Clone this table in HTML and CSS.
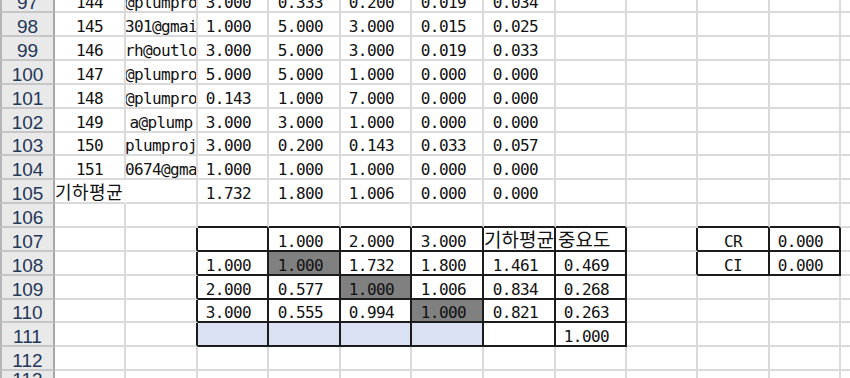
FILE: index.html
```html
<!DOCTYPE html>
<html lang="ko">
<head>
<meta charset="utf-8">
<title>Sheet</title>
<link rel="stylesheet" href="styles.css">
</head>
<body>
<div class="sheet">
  <div class="row top">
    <div class="h">97</div>
    <div class="c mid">144</div>
    <div class="c mid">@plumpro</div>
    <div class="c num">3.000</div>
    <div class="c num">0.333</div>
    <div class="c num">0.200</div>
    <div class="c num">0.019</div>
    <div class="c num">0.034</div>
    <div class="c"></div><div class="c"></div><div class="c"></div><div class="c"></div>
    <div class="c last"></div>
  </div>
  <div class="row">
    <div class="h">98</div>
    <div class="c mid">145</div>
    <div class="c mid">301@gmai</div>
    <div class="c num">1.000</div>
    <div class="c num">5.000</div>
    <div class="c num">3.000</div>
    <div class="c num">0.015</div>
    <div class="c num">0.025</div>
    <div class="c"></div><div class="c"></div><div class="c"></div><div class="c"></div>
    <div class="c last"></div>
  </div>
  <div class="row">
    <div class="h">99</div>
    <div class="c mid">146</div>
    <div class="c mid">rh@outlo</div>
    <div class="c num">3.000</div>
    <div class="c num">5.000</div>
    <div class="c num">3.000</div>
    <div class="c num">0.019</div>
    <div class="c num">0.033</div>
    <div class="c"></div><div class="c"></div><div class="c"></div><div class="c"></div>
    <div class="c last"></div>
  </div>
  <div class="row">
    <div class="h">100</div>
    <div class="c mid">147</div>
    <div class="c mid">@plumpro</div>
    <div class="c num">5.000</div>
    <div class="c num">5.000</div>
    <div class="c num">1.000</div>
    <div class="c num">0.000</div>
    <div class="c num">0.000</div>
    <div class="c"></div><div class="c"></div><div class="c"></div><div class="c"></div>
    <div class="c last"></div>
  </div>
  <div class="row">
    <div class="h">101</div>
    <div class="c mid">148</div>
    <div class="c mid">@plumpro</div>
    <div class="c num">0.143</div>
    <div class="c num">1.000</div>
    <div class="c num">7.000</div>
    <div class="c num">0.000</div>
    <div class="c num">0.000</div>
    <div class="c"></div><div class="c"></div><div class="c"></div><div class="c"></div>
    <div class="c last"></div>
  </div>
  <div class="row">
    <div class="h">102</div>
    <div class="c mid">149</div>
    <div class="c mid">a@plump</div>
    <div class="c num">3.000</div>
    <div class="c num">3.000</div>
    <div class="c num">1.000</div>
    <div class="c num">0.000</div>
    <div class="c num">0.000</div>
    <div class="c"></div><div class="c"></div><div class="c"></div><div class="c"></div>
    <div class="c last"></div>
  </div>
  <div class="row short">
    <div class="h">103</div>
    <div class="c mid">150</div>
    <div class="c mid">plumproj</div>
    <div class="c num">3.000</div>
    <div class="c num">0.200</div>
    <div class="c num">0.143</div>
    <div class="c num">0.033</div>
    <div class="c num">0.057</div>
    <div class="c"></div><div class="c"></div><div class="c"></div><div class="c"></div>
    <div class="c last"></div>
  </div>
  <div class="row">
    <div class="h">104</div>
    <div class="c mid">151</div>
    <div class="c mid">0674@gma</div>
    <div class="c num">1.000</div>
    <div class="c num">1.000</div>
    <div class="c num">1.000</div>
    <div class="c num">0.000</div>
    <div class="c num">0.000</div>
    <div class="c"></div><div class="c"></div><div class="c"></div><div class="c"></div>
    <div class="c last"></div>
  </div>
  <div class="row">
    <div class="h">105</div>
    <div class="c ko spill">기하평균</div>
    <div class="c"></div>
    <div class="c num">1.732</div>
    <div class="c num">1.800</div>
    <div class="c num">1.006</div>
    <div class="c num">0.000</div>
    <div class="c num">0.000</div>
    <div class="c"></div><div class="c"></div><div class="c"></div><div class="c"></div>
    <div class="c last"></div>
  </div>
  <div class="row">
    <div class="h">106</div>
    <div class="c"></div>
    <div class="c"></div>
    <div class="c db"></div>
    <div class="c db"></div>
    <div class="c db"></div>
    <div class="c db"></div>
    <div class="c db"></div>
    <div class="c db"></div>
    <div class="c"></div>
    <div class="c db"></div>
    <div class="c db"></div>
    <div class="c last"></div>
  </div>
  <div class="row">
    <div class="h">107</div>
    <div class="c"></div>
    <div class="c dr"></div>
    <div class="c db dr"></div>
    <div class="c num db dr">1.000</div>
    <div class="c num db dr">2.000</div>
    <div class="c num db dr">3.000</div>
    <div class="c ko head db dr">기하평균</div>
    <div class="c ko head pad db dr">중요도</div>
    <div class="c dr"></div>
    <div class="c mid db dr">CR</div>
    <div class="c num db dr">0.000</div>
    <div class="c last"></div>
  </div>
  <div class="row">
    <div class="h">108</div>
    <div class="c"></div>
    <div class="c dr"></div>
    <div class="c num db dr">1.000</div>
    <div class="c num db dr gray">1.000</div>
    <div class="c num db dr">1.732</div>
    <div class="c num db dr">1.800</div>
    <div class="c num db dr">1.461</div>
    <div class="c num db dr">0.469</div>
    <div class="c dr"></div>
    <div class="c mid db dr">CI</div>
    <div class="c num db dr">0.000</div>
    <div class="c last"></div>
  </div>
  <div class="row">
    <div class="h">109</div>
    <div class="c"></div>
    <div class="c dr"></div>
    <div class="c num db dr">2.000</div>
    <div class="c num db dr">0.577</div>
    <div class="c num db dr gray">1.000</div>
    <div class="c num db dr">1.006</div>
    <div class="c num db dr">0.834</div>
    <div class="c num db dr">0.268</div>
    <div class="c"></div>
    <div class="c"></div>
    <div class="c"></div>
    <div class="c last"></div>
  </div>
  <div class="row short">
    <div class="h">110</div>
    <div class="c"></div>
    <div class="c dr"></div>
    <div class="c num db dr">3.000</div>
    <div class="c num db dr">0.555</div>
    <div class="c num db dr">0.994</div>
    <div class="c num db dr gray">1.000</div>
    <div class="c num db dr">0.821</div>
    <div class="c num db dr">0.263</div>
    <div class="c"></div>
    <div class="c"></div>
    <div class="c"></div>
    <div class="c last"></div>
  </div>
  <div class="row">
    <div class="h">111</div>
    <div class="c"></div>
    <div class="c dr"></div>
    <div class="c db dr blue"></div>
    <div class="c db dr blue"></div>
    <div class="c db dr blue"></div>
    <div class="c db dr blue"></div>
    <div class="c db dr"></div>
    <div class="c num db dr">1.000</div>
    <div class="c"></div>
    <div class="c"></div>
    <div class="c"></div>
    <div class="c last"></div>
  </div>
  <div class="row">
    <div class="h">112</div>
    <div class="c"></div><div class="c"></div><div class="c"></div><div class="c"></div>
    <div class="c"></div><div class="c"></div><div class="c"></div><div class="c"></div>
    <div class="c"></div><div class="c"></div><div class="c"></div>
    <div class="c last"></div>
  </div>
  <div class="row">
    <div class="h cut">113</div>
    <div class="c"></div><div class="c"></div><div class="c"></div><div class="c"></div>
    <div class="c"></div><div class="c"></div><div class="c"></div><div class="c"></div>
    <div class="c"></div><div class="c"></div><div class="c"></div>
    <div class="c last"></div>
  </div>
</div>
</body>
</html>
```

FILE: styles.css
```css
html, body {
  margin: 0;
  padding: 0;
  background: #ffffff;
}

.sheet {
  height: 378px;
  overflow: hidden;
  font-family: "DejaVu Sans Mono", "Liberation Mono", monospace;
  font-size: 16px;
  letter-spacing: -0.6px;
  color: #111111;
}

.row {
  display: grid;
  grid-template-columns: 55px 71px 72px 71px 72px 71px 72px 72px 71px 71px 72px 71px 1fr;
  height: 24px;
}

.row.top {
  height: 13px;
}

.row.short {
  height: 23px;
}

.h,
.c {
  box-sizing: border-box;
  display: flex;
  align-items: flex-end;
  overflow: hidden;
  white-space: nowrap;
}

.h {
  background: #e9e9e9;
  border-left: 2px solid #b4b4b4;
  border-right: 2px solid #a6a6a6;
  border-bottom: 2px solid #c6c6c6;
  justify-content: center;
  font-family: "Liberation Sans", Arial, sans-serif;
  font-size: 19px;
  line-height: 17px;
  letter-spacing: 0;
  color: #24375a;
}

.h.cut {
  align-items: flex-start;
}

.c {
  border-right: 2px solid #dadada;
  border-bottom: 2px solid #dadada;
  line-height: 16px;
}

.c.last {
  border-right: 0;
}

.num {
  justify-content: flex-end;
  padding-right: 16px;
}

.mid {
  justify-content: center;
}

.ko {
  font-family: "Noto Sans CJK KR", "Noto Sans", sans-serif;
  font-size: 18px;
  line-height: 18px;
  letter-spacing: 0.5px;
  padding-bottom: 2px;
}

.ko.head {
  font-size: 19px;
  letter-spacing: 0;
}

.ko.pad {
  padding-left: 2px;
}

.spill {
  overflow: visible;
  border-right-color: transparent;
}

.db {
  border-bottom-color: #1c1c1c;
}

.dr {
  border-right-color: #1c1c1c;
}

.gray {
  background: #808080;
}

.blue {
  background: #d9e1f2;
}
```
